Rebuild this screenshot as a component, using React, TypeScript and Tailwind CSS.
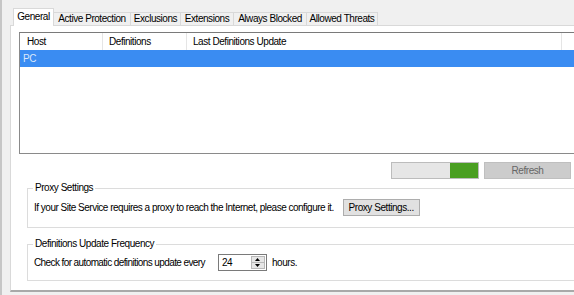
import React from "react";

const tabs = [
  { label: "General", w: "w-[41px]", sel: true },
  { label: "Active Protection", w: "w-[77px]" },
  { label: "Exclusions", w: "w-[50px]" },
  { label: "Extensions", w: "w-[53px]" },
  { label: "Always Blocked", w: "w-[73px]" },
  { label: "Allowed Threats", w: "w-[71px]" },
];

export default function App() {
  return (
    <div
      className="w-[574px] h-[295px] bg-[#f0f0f0] overflow-hidden flex text-[10px] tracking-[-0.45px] text-black leading-none whitespace-nowrap"
      style={{ fontFamily: '"Liberation Sans", Arial, sans-serif' }}
    >
      <div className="w-[2px] shrink-0 bg-[#c6c6c6]" />
      <div className="ml-[8px] flex flex-col pt-[8px] shrink-0 w-[600px]">
        {/* tabs */}
        <div className="flex items-end h-[17px] pl-[3px]">
          {tabs.map((t) =>
            t.sel ? (
              <div
                key={t.label}
                className={`${t.w} relative z-10 h-[18px] -mb-px bg-white border border-b-0 border-[#d9d9d9] flex items-center justify-center pb-[1px]`}
              >
                {t.label}
              </div>
            ) : (
              <div
                key={t.label}
                className={`${t.w} h-[13px] bg-[#f0f0f0] border-t border-r border-[#d9d9d9] flex items-center justify-center`}
              >
                {t.label}
              </div>
            )
          )}
        </div>
        {/* page */}
        <div className="h-[267px] bg-white border-t border-l border-[#d9d9d9] border-b-2 border-b-[#a9a9a9] flex flex-col">
          {/* list */}
          <div className="ml-[8px] mt-[6px] w-[570px] h-[122px] border border-[#8a8a8a] border-t-[#7a7a7a] bg-white flex flex-col">
            <div className="h-[17px] flex items-stretch bg-white">
              <div className="w-[83px] border-r border-[#e5e5e5] pl-[7px] flex items-center">Host</div>
              <div className="w-[84px] border-r border-[#e5e5e5] pl-[6px] flex items-center">Definitions</div>
              <div className="w-[375px] border-r border-[#e5e5e5] pl-[6px] flex items-center">Last Definitions Update</div>
              <div className="flex-1" />
            </div>
            <div className="h-[17px] bg-[#3a8cf2] text-[#dbe8fb] pl-[3px] flex items-center">PC</div>
          </div>
          {/* progress + refresh */}
          <div className="flex ml-[380px] mt-[8px] gap-[5px]">
            <div className="w-[88px] h-[17px] border border-[#bcbcbc] bg-[#e6e6e6] flex justify-end">
              <div className="w-[28px] h-full bg-[#4a9f22]" />
            </div>
            <div className="w-[87px] h-[17px] border border-[#bfbfbf] bg-[#cccccc] text-[#666666] flex items-center justify-center">
              Refresh
            </div>
          </div>
          {/* Proxy settings group */}
          <div className="relative ml-[16px] mt-[9px] w-[570px] h-[40px] border border-[#dcdcdc]">
            <span className="absolute left-[5px] -top-[6px] bg-white px-[2px]">Proxy Settings</span>
            <div className="flex items-center pl-[6px] mt-[10px] gap-[9px]">
              <span className="tracking-[-0.5px]">If your Site Service requires a proxy to reach the Internet, please configure it.</span>
              <div className="w-[77px] h-[17px] border border-[#adadad] bg-[#e1e1e1] flex items-center justify-center">
                Proxy Settings...
              </div>
            </div>
          </div>
          {/* Frequency group */}
          <div className="relative ml-[16px] mt-[16px] w-[570px] h-[37px] border border-[#dcdcdc]">
            <span className="absolute left-[5px] -top-[6px] bg-white px-[2px]">Definitions Update Frequency</span>
            <div className="flex items-center pl-[6px] mt-[9px]">
              <span className="tracking-[-0.6px]">Check for automatic definitions update every</span>
              <div className="ml-[13px] w-[49px] h-[17px] border border-[#7a7a7a] bg-white flex">
                <div className="flex-1 pl-[3px] flex items-center">24</div>
                <div className="w-[14px] my-[1px] mr-[1px] flex flex-col bg-[#e6e6e6] border border-[#b8b8b8]">
                  <div className="flex-1 flex items-center justify-center border-b border-[#b8b8b8]">
                    <svg width="5" height="3" viewBox="0 0 5 3"><path d="M0 3 L2.5 0 L5 3 Z" fill="#000" /></svg>
                  </div>
                  <div className="flex-1 flex items-center justify-center">
                    <svg width="5" height="3" viewBox="0 0 5 3"><path d="M0 0 L2.5 3 L5 0 Z" fill="#000" /></svg>
                  </div>
                </div>
              </div>
              <span className="ml-[5px]">hours.</span>
            </div>
          </div>
        </div>
      </div>
    </div>
  );
}
